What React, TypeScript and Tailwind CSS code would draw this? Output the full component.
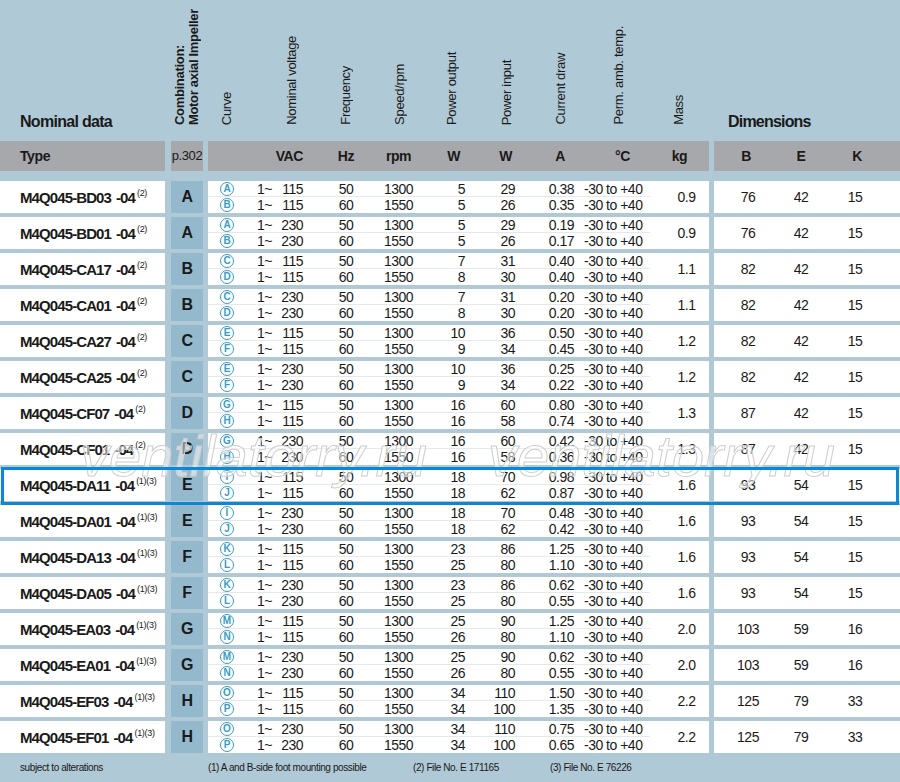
import React from 'react';

type Row = {
  type: string;
  note: string;
  combo: string;
  curves: [string, string];
  volt: string;
  wout: [string, string];
  win: [string, string];
  amp: [string, string];
  mass: string;
  dims: [string, string, string];
};

const rows: Row[] = [
  { type: 'M4Q045-BD03', note: '(2)', combo: 'A', curves: ['A', 'B'], volt: '115', wout: ['5', '5'], win: ['29', '26'], amp: ['0.38', '0.35'], mass: '0.9', dims: ['76', '42', '15'] },
  { type: 'M4Q045-BD01', note: '(2)', combo: 'A', curves: ['A', 'B'], volt: '230', wout: ['5', '5'], win: ['29', '26'], amp: ['0.19', '0.17'], mass: '0.9', dims: ['76', '42', '15'] },
  { type: 'M4Q045-CA17', note: '(2)', combo: 'B', curves: ['C', 'D'], volt: '115', wout: ['7', '8'], win: ['31', '30'], amp: ['0.40', '0.40'], mass: '1.1', dims: ['82', '42', '15'] },
  { type: 'M4Q045-CA01', note: '(2)', combo: 'B', curves: ['C', 'D'], volt: '230', wout: ['7', '8'], win: ['31', '30'], amp: ['0.20', '0.20'], mass: '1.1', dims: ['82', '42', '15'] },
  { type: 'M4Q045-CA27', note: '(2)', combo: 'C', curves: ['E', 'F'], volt: '115', wout: ['10', '9'], win: ['36', '34'], amp: ['0.50', '0.45'], mass: '1.2', dims: ['82', '42', '15'] },
  { type: 'M4Q045-CA25', note: '(2)', combo: 'C', curves: ['E', 'F'], volt: '230', wout: ['10', '9'], win: ['36', '34'], amp: ['0.25', '0.22'], mass: '1.2', dims: ['82', '42', '15'] },
  { type: 'M4Q045-CF07', note: '(2)', combo: 'D', curves: ['G', 'H'], volt: '115', wout: ['16', '16'], win: ['60', '58'], amp: ['0.80', '0.74'], mass: '1.3', dims: ['87', '42', '15'] },
  { type: 'M4Q045-CF01', note: '(2)', combo: 'D', curves: ['G', 'H'], volt: '230', wout: ['16', '16'], win: ['60', '58'], amp: ['0.42', '0.36'], mass: '1.3', dims: ['87', '42', '15'] },
  { type: 'M4Q045-DA11', note: '(1)(3)', combo: 'E', curves: ['I', 'J'], volt: '115', wout: ['18', '18'], win: ['70', '62'], amp: ['0.98', '0.87'], mass: '1.6', dims: ['93', '54', '15'] },
  { type: 'M4Q045-DA01', note: '(1)(3)', combo: 'E', curves: ['I', 'J'], volt: '230', wout: ['18', '18'], win: ['70', '62'], amp: ['0.48', '0.42'], mass: '1.6', dims: ['93', '54', '15'] },
  { type: 'M4Q045-DA13', note: '(1)(3)', combo: 'F', curves: ['K', 'L'], volt: '115', wout: ['23', '25'], win: ['86', '80'], amp: ['1.25', '1.10'], mass: '1.6', dims: ['93', '54', '15'] },
  { type: 'M4Q045-DA05', note: '(1)(3)', combo: 'F', curves: ['K', 'L'], volt: '230', wout: ['23', '25'], win: ['86', '80'], amp: ['0.62', '0.55'], mass: '1.6', dims: ['93', '54', '15'] },
  { type: 'M4Q045-EA03', note: '(1)(3)', combo: 'G', curves: ['M', 'N'], volt: '115', wout: ['25', '26'], win: ['90', '80'], amp: ['1.25', '1.10'], mass: '2.0', dims: ['103', '59', '16'] },
  { type: 'M4Q045-EA01', note: '(1)(3)', combo: 'G', curves: ['M', 'N'], volt: '230', wout: ['25', '26'], win: ['90', '80'], amp: ['0.62', '0.55'], mass: '2.0', dims: ['103', '59', '16'] },
  { type: 'M4Q045-EF03', note: '(1)(3)', combo: 'H', curves: ['O', 'P'], volt: '115', wout: ['34', '34'], win: ['110', '100'], amp: ['1.50', '1.35'], mass: '2.2', dims: ['125', '79', '33'] },
  { type: 'M4Q045-EF01', note: '(1)(3)', combo: 'H', curves: ['O', 'P'], volt: '230', wout: ['34', '34'], win: ['110', '100'], amp: ['0.75', '0.65'], mass: '2.2', dims: ['125', '79', '33'] },
];

const VLabel = ({ children, className = '' }: { children: React.ReactNode; className?: string }) => (
  <div className={`[writing-mode:vertical-rl] rotate-180 leading-[14px] whitespace-nowrap ${className}`}>
    {children}
  </div>
);

const CurveMark = ({ letter }: { letter: string }) => (
  <span className="ml-[12px] w-[14px] h-[14px] rounded-full border border-[#3a9cc0] text-[#3a9cc0] text-[10px] font-bold tracking-normal flex items-center justify-center leading-none">
    {letter}
  </span>
);

const SubRow = ({ r, i }: { r: Row; i: 0 | 1 }) => (
  <div className={`h-[16px] flex items-center whitespace-nowrap ${i === 0 ? 'border-b border-[#e4e9ec]' : ''}`}>
    <div className="w-[39px] flex">
      <CurveMark letter={r.curves[i]} />
    </div>
    <div className="w-[73px] flex">
      <span className="ml-[10px] w-[24px]">1~</span>
      <span className="w-[22px] text-right">{r.volt}</span>
    </div>
    <div className="w-[52px] text-center">{i === 0 ? '50' : '60'}</div>
    <div className="w-[53px] text-center">{i === 0 ? '1300' : '1550'}</div>
    <div className="w-[55px] text-right pr-[15px]">{r.wout[i]}</div>
    <div className="w-[50px] text-right pr-[15px]">{r.win[i]}</div>
    <div className="w-[50px] text-right pr-[6px]">{r.amp[i]}</div>
    <div className="w-[70px] pl-[4px]">-30 to +40</div>
  </div>
);

export default function App() {
  return (
    <div className="relative w-[900px] h-[782px] overflow-hidden bg-[#b0c9d6] text-[#1a1a1a] font-['Liberation_Sans',Arial,sans-serif]">
      {/* column headings */}
      <div className="h-[141px] flex items-end">
        <div className="w-[165px] pl-[20px] pb-[11px] text-[16px] font-bold leading-none tracking-[-0.7px]">Nominal data</div>
        <div className="w-[32px] ml-[6px] pb-[16px] pl-[2px]">
          <VLabel className="font-bold text-[13px] tracking-[-0.3px]">
            Combination:
            <br />
            Motor axial Impeller
          </VLabel>
        </div>
        <div className="w-[501px] ml-[5px] pb-[16px] flex items-end text-[13px] tracking-[-0.3px]">
          <div className="w-[39px] pl-[12px]"><VLabel>Curve</VLabel></div>
          <div className="w-[73px] pl-[38px]"><VLabel>Nominal voltage</VLabel></div>
          <div className="w-[52px] pl-[19px]"><VLabel>Frequency</VLabel></div>
          <div className="w-[53px] pl-[21px]"><VLabel>Speed/rpm</VLabel></div>
          <div className="w-[55px] pl-[20px]"><VLabel>Power output</VLabel></div>
          <div className="w-[50px] pl-[20px]"><VLabel>Power input</VLabel></div>
          <div className="w-[50px] pl-[24px]"><VLabel>Current draw</VLabel></div>
          <div className="w-[70px] pl-[32px]"><VLabel>Perm. amb. temp.</VLabel></div>
          <div className="w-[59px] pl-[22px]"><VLabel>Mass</VLabel></div>
        </div>
        <div className="w-[186px] ml-[5px] pl-[14px] pb-[11px] text-[16px] font-bold leading-none tracking-[-0.8px]">Dimensions</div>
      </div>

      {/* units band */}
      <div className="h-[30px] flex text-[14px] tracking-[-0.4px]">
        <div className="w-[165px] bg-[#a7a8ab] pl-[20px] flex items-center font-bold text-[14px]">Type</div>
        <div className="w-[32px] ml-[6px] bg-[#a7a8ab] flex items-center justify-center text-[13px]">p.302</div>
        <div className="w-[501px] ml-[5px] bg-[#a7a8ab] flex items-center font-bold">
          <div className="w-[39px]" />
          <div className="w-[73px] text-right pr-[17px]">VAC</div>
          <div className="w-[52px] text-center">Hz</div>
          <div className="w-[53px] text-center">rpm</div>
          <div className="w-[55px] text-right pr-[20px]">W</div>
          <div className="w-[50px] text-right pr-[18px]">W</div>
          <div className="w-[50px] text-right pr-[15px]">A</div>
          <div className="w-[70px] pl-[35px]">°C</div>
          <div className="w-[59px] text-center">kg</div>
        </div>
        <div className="w-[186px] ml-[5px] bg-[#a7a8ab] flex items-center font-bold">
          <div className="w-[64px] text-center">B</div>
          <div className="w-[46px] text-center">E</div>
          <div className="w-[66px] text-center">K</div>
        </div>
      </div>

      {/* data rows */}
      <div className="mt-[10px] flex flex-col gap-[4px] text-[14px] tracking-[-0.5px]">
        {rows.map((r) => (
          <div key={r.type} className="h-[32px] flex leading-none">
            <div className="w-[165px] bg-white pl-[20px] flex items-center font-bold text-[15px] tracking-[-0.9px] whitespace-nowrap">
              <span>{r.type}</span>
              <span className="ml-[5px]">-04</span>
              <span className="ml-[2px] mb-[7px] text-[9px] font-normal tracking-[-0.3px]">{r.note}</span>
            </div>
            <div className="w-[32px] ml-[6px] bg-[#94b8cc] flex items-center justify-center font-bold text-[16px]">
              {r.combo}
            </div>
            <div className="w-[501px] ml-[5px] bg-white flex">
              <div className="w-[442px]">
                <SubRow r={r} i={0} />
                <SubRow r={r} i={1} />
              </div>
              <div className="w-[59px] pl-[14px] flex items-center justify-center">{r.mass}</div>
            </div>
            <div className="w-[186px] ml-[5px] bg-white flex items-center">
              <div className="w-[68px] text-center">{r.dims[0]}</div>
              <div className="w-[38px] text-center">{r.dims[1]}</div>
              <div className="w-[70px] text-center">{r.dims[2]}</div>
            </div>
          </div>
        ))}
      </div>

      {/* footnotes */}
      <div className="h-[29px] flex items-center text-[10px] tracking-[-0.4px] whitespace-nowrap">
        <div className="w-[208px] pl-[20px]">subject to alterations</div>
        <div className="w-[205px]">(1) A and B-side foot mounting possible</div>
        <div className="w-[137px]">(2) File No. E 171165</div>
        <div>(3) File No. E 76226</div>
      </div>

      {/* watermark */}
      <div className="absolute left-[80px] top-[427px] text-[58px] italic leading-none text-white/50 [-webkit-text-stroke:1px_#cdcdcd] pointer-events-none">
        ventilatorry.ru
      </div>
      <div className="absolute left-[488px] top-[427px] text-[58px] italic leading-none text-white/50 [-webkit-text-stroke:1px_#cdcdcd] pointer-events-none">
        ventilatorry.ru
      </div>

      {/* highlighted row */}
      <div className="absolute left-[1px] right-[1px] top-[467px] h-[38px] border-[3px] border-[#0a88d6] pointer-events-none" />
    </div>
  );
}
